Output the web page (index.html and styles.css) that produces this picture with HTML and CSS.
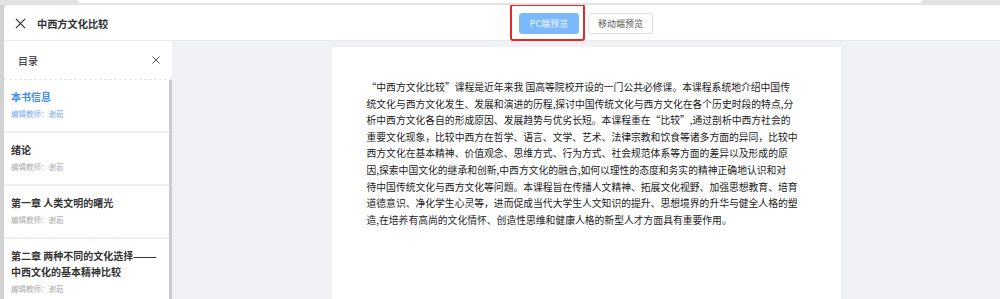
FILE: index.html
```html
<!DOCTYPE html>
<html lang="zh-CN">
<head>
	<meta charset="UTF-8">
	<title>中西方文化比较</title>
	<link rel="stylesheet" href="styles.css">
</head>
<body>
	<div class="backdrop-top"><div class="backdrop-card"></div></div>
	<div class="modal">
		<header class="modal-head">
			<div class="head-left">
				<svg class="icon-close" viewBox="0 0 12 12"><path d="M1 1L11 11M11 1L1 11"/></svg>
				<span class="book-title">中西方文化比较</span>
			</div>
			<div class="head-tabs">
				<div class="tab-wrap">
					<button class="tab tab-active">PC端预览</button>
					<span class="mark"></span>
				</div>
				<button class="tab">移动端预览</button>
			</div>
		</header>
		<div class="modal-body">
			<aside class="toc">
				<div class="toc-head">
					<span>目录</span>
					<svg class="icon-close-sm" viewBox="0 0 8 8"><path d="M0.5 0.5L7.5 7.5M7.5 0.5L0.5 7.5"/></svg>
				</div>
				<ul class="toc-list">
					<li class="toc-item active">
						<div class="toc-title">本书信息</div>
						<div class="toc-sub">编辑教师：谢茹</div>
					</li>
					<li class="toc-item">
						<div class="toc-title">绪论</div>
						<div class="toc-sub">编辑教师：谢茹</div>
					</li>
					<li class="toc-item">
						<div class="toc-title">第一章 人类文明的曙光</div>
						<div class="toc-sub">编辑教师：谢茹</div>
					</li>
					<li class="toc-item">
						<div class="toc-title">第二章 两种不同的文化选择<span class="dash">——</span><br>中西文化的基本精神比较</div>
						<div class="toc-sub">编辑教师：谢茹</div>
					</li>
				</ul>
			</aside>
			<main class="stage">
				<article class="paper">
					<p class="intro"><span class="q-open">“</span>中西方文化比较<span class="q-close">”</span>课程是近年来我 国高等院校开设的一门公共必修课。本课程系统地介绍中国传<br>统文化与西方文化发生、发展和演进的历程,探讨中国传统文化与西方文化在各个历史时段的特点,分<br>析中西方文化各自的形成原因、发展趋势与优劣长短。本课程重在<span class="q-open">“</span>比较<span class="q-close">”</span>,通过剖析中西方社会的<br>重要文化现象，比较中西方在哲学、语言、文学、艺术、法律宗教和饮食等诸多方面的异同，比较中<br>西方文化在基本精神、价值观念、思维方式、行为方式、社会规范体系等方面的差异以及形成的原<br>因,探索中国文化的继承和创新,中西方文化的融合,如何以理性的态度和务实的精神正确地认识和对<br>待中国传统文化与西方文化等问题。本课程旨在传播人文精神、拓展文化视野、加强思想教育、培育<br>道德意识、净化学生心灵等，进而促成当代大学生人文知识的提升、思想境界的升华与健全人格的塑<br>造,在培养有高尚的文化情怀、创造性思维和健康人格的新型人才方面具有重要作用。</p>
				</article>
			</main>
		</div>
	</div>
</body>
</html>
```

FILE: styles.css
```css
*{
	box-sizing: border-box;
	font-family: "Noto Sans CJK SC", "Noto Sans", sans-serif;
}
html, body{
	margin: 0;
	height: 299px;
	overflow: hidden;
}
body{
	display: flex;
	flex-direction: column;
	background-color: #d2d2d2;
}
.backdrop-top{
	height: 5px;
	background-color: #e3e3e3;
}
.backdrop-card{
	height: 3px;
	margin: 0 78px;
	background-color: #fff;
	border-radius: 0 0 6px 6px;
}
.modal{
	flex: 1;
	margin-left: 4px;
	background-color: #fff;
	border-radius: 4px 0 0 0;
	display: flex;
	flex-direction: column;
	overflow: hidden;
}
.modal-head{
	height: 36px;
	flex-shrink: 0;
	display: flex;
	border-bottom: 1px solid #ebebeb;
}
.head-left{
	width: 168px;
	display: flex;
	align-items: center;
	padding-left: 11px;
	padding-top: 1px;
}
.icon-close{
	width: 11px;
	height: 11px;
	fill: none;
	stroke: #333;
	stroke-width: 1.3;
}
.book-title{
	margin-left: 11px;
	font-size: 10.2px;
	font-weight: bold;
	color: #303133;
}
.head-tabs{
	flex: 1;
	display: flex;
	justify-content: center;
	align-items: center;
	gap: 9px;
	padding-top: 1px;
}
.tab-wrap{
	position: relative;
	display: flex;
}
.tab{
	height: 21px;
	padding: 0;
	width: 65px;
	font-size: 9px;
	color: #555;
	background-color: #fff;
	border: 1px solid #dcdfe6;
	border-radius: 3px;
}
.tab-active{
	width: 60px;
	color: #eef6ff;
	background-color: #7cb9fc;
	border-color: #7cb9fc;
}
.mark{
	position: absolute;
	top: -9px;
	bottom: -7px;
	left: -9px;
	right: -6px;
	border: 2px solid #e5282b;
	border-radius: 3px;
}
.modal-body{
	flex: 1;
	display: flex;
	min-height: 0;
}
.toc{
	width: 168px;
	display: flex;
	flex-direction: column;
	background-color: #fff;
}
.toc-head{
	height: 39px;
	flex-shrink: 0;
	display: flex;
	align-items: center;
	justify-content: space-between;
	padding: 0 12px 0 14px;
	border-bottom: 1px dashed #e6e6e6;
	font-size: 10px;
	color: #222;
}
.icon-close-sm{
	width: 8px;
	height: 8px;
	fill: none;
	stroke: #555;
	stroke-width: 1;
}
.toc-list{
	flex: 1;
	margin: 0;
	padding: 0;
	list-style: none;
	border-right: 3px solid #cbcbcb;
	overflow: hidden;
}
.toc-item{
	padding: 9px 0 10px 7px;
	border-bottom: 2px solid #f0f0f0;
}
.toc-title{
	font-size: 10px;
	line-height: 16px;
	font-weight: bold;
	color: #333;
}
.dash{
	display: inline-block;
	transform: scaleX(1.4);
	transform-origin: left center;
}
.toc-sub{
	margin-top: 2px;
	font-size: 7.5px;
	line-height: 14px;
	color: #ababab;
}
.toc-item.active .toc-title{
	color: #3f8cf3;
}
.toc-item.active .toc-sub{
	color: #7aa9f2;
}
.stage{
	flex: 1;
	display: flex;
	justify-content: center;
	padding-top: 6px;
	background-color: #f0f1f4;
}
.paper{
	width: 509px;
	padding: 32px 0 0 35px;
	background-color: #fff;
}
.intro{
	margin: 0;
	font-size: 9.8px;
	line-height: 16.6px;
	color: #1a1a1a;
	white-space: nowrap;
}
.q-open, .q-close{
	display: inline-block;
	width: 1em;
}
.q-open{
	text-align: right;
	padding-right: 1px;
}
```
